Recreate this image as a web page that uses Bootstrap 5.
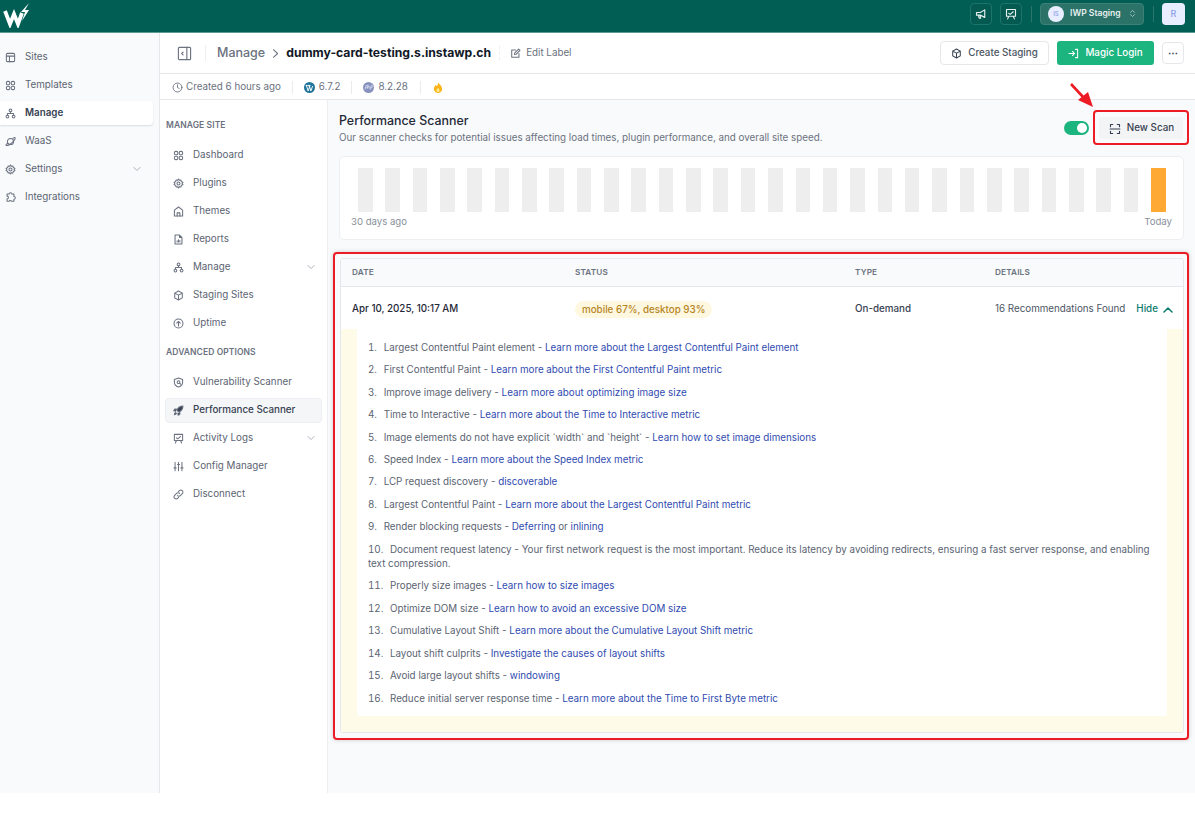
<!DOCTYPE html>
<html lang="en"><head><meta charset="utf-8"><title>Performance Scanner</title>
<link href="https://cdn.jsdelivr.net/npm/bootstrap@5.3.0/dist/css/bootstrap.min.css" rel="stylesheet">
<style>
html,body{height:100%;background:#fff}
body{font-family:Inter,"Liberation Sans",sans-serif;font-size:9.8px;color:#4b5563;overflow:hidden}
svg.i{width:11px;height:11px;fill:none;stroke:currentColor;stroke-width:1.5;stroke-linecap:round;stroke-linejoin:round;flex:none}
.app{height:793px;display:flex;flex-direction:column}
.topbar{height:33px;background:#005e54;border-bottom:1px solid #5c9b93;padding:0 10px 0 3px;flex:none}
.logo{width:28px;height:27px;margin-bottom:3px}
.tb-icon{width:22px;height:22px;border:1px solid #1d7469;border-radius:4px;color:#e5efed;background:#045a50;margin-bottom:5px}
.tb-icon svg.i{width:12px;height:12px}
.tb-div{width:1px;height:16px;background:#2c756c;margin:0 8px 5px 9px}
.org{width:104px;height:22px;background:#2b7269;border:1px solid #3d8077;border-radius:4px;color:#e8f1ef;font-weight:600;font-size:8.6px;padding:0 6px 0 7px;margin-bottom:5px}
.org .av{width:16px;height:16px;border-radius:50%;background:#e8eeff;color:#8d9fe6;font-size:6px;font-weight:500;margin-right:6px}
.user{width:23px;height:22px;background:#e8eeff;border-radius:4px;color:#8d9fe6;font-size:9px;font-weight:500;margin-bottom:4px}
.body-row{flex:1;min-height:0}
.side{width:160px;flex:none;background:#f9fafb;border-right:1px solid #e5e7eb;padding-top:10px}
.navi{height:28px;display:flex;align-items:center;color:#5b6472;text-decoration:none;font-size:9.8px}
.side .navi{padding-left:5px;padding-right:11px;margin-right:6px}
.side .navi svg.i:first-child{margin-right:9px;color:#6b7280}
.side .wrap-active{height:28px;display:flex;align-items:center;margin-right:6px}
.side .active-i{height:24px;width:100%;background:#fff;border-radius:0 4px 4px 0;box-shadow:0 1px 2px rgba(0,0,0,.12);margin:0;padding-left:5px;color:#374151;font-weight:600}
.side .active-i svg.i{margin-right:9px}
.chev{margin-left:auto;width:10px!important;height:10px!important;color:#9ca3af;stroke-width:1.3!important}
.head1{height:41px;border-bottom:1px solid #e5e7eb;padding:0 11px 0 17px;flex:none}
.collapse-ic{width:15px!important;height:15px!important;color:#6b7280;stroke-width:1.2!important}
.vr1{width:1px;height:16px;background:#eceef1;margin:0 11px 0 13px}
.crumb{font-size:12.5px;color:#6b7280;font-weight:500}
.crumb svg{width:11px;height:11px;color:#6b7280;margin:0 5px}
.site{font-size:12.2px;color:#111827;font-weight:700}
.edit{font-size:9.8px;color:#6b7280;margin-left:8px;padding-left:10px;border-left:1px dashed #eceef1;line-height:14px}
.edit svg{margin-right:5px}
.btn-w{--bs-btn-font-size:9.8px;height:24px;width:109px;padding:0;justify-content:center;background:#fff;border:1px solid #e5e7eb;color:#4b5563;font-weight:500;border-radius:4px;display:flex;align-items:center;gap:6px}
.btn-m{--bs-btn-font-size:9.8px;height:24px;width:97px;padding:0;background:#1cb47f;border:0;color:#fff;font-weight:500;border-radius:3px;display:flex;align-items:center;justify-content:center;gap:6px;margin:0 8px}
.btn-d{width:22px;height:22px;padding:0;background:#fff;border:1px solid #e5e7eb;border-radius:4px;color:#374151;font-size:10px;font-weight:700;line-height:1}
.head2{height:26px;border-bottom:1px solid #e5e7eb;padding:1px 0 0 12px;color:#6b7280;font-size:9.8px;flex:none}
.head2 .m{display:flex;align-items:center;gap:3px}
.head2 .v{gap:4px}
.head2 .s{width:1px;height:13px;background:#e9ebee;margin:0 11px}
.head2 .s.w{margin:0 12px}
.sub{width:168px;flex:none;border-right:1px solid #eceef1;padding:0 5px;background:#fff}
.sec{font-size:8.5px;font-weight:600;color:#6b7280;line-height:14px;letter-spacing:.01em;padding-left:1px}
.sub .navi{padding:0 6px 0 8px}
.sub .navi svg.i:first-child{margin-right:9px;color:#6b7280}
.sub .act{height:25px;margin:2px 0 1px;background:#f5f6f8;border:1px solid #eceef1;border-radius:4px;color:#374151;font-weight:500;padding-left:7px}
.content{background:#f9fafb;padding:0 6px;min-width:0}
.top-row{height:46px;padding:10px 0 0 5px;position:relative}
.heading{padding-top:3px}
.title{font-size:12.4px;color:#1f2937;font-weight:500;line-height:16px}
.desc{font-size:9.8px;color:#6b7280;line-height:14px;margin-top:2px}
.ann{border:2px solid #ed1c24;border-radius:4px}
.ann-btn{width:96px;height:35px}
.scan{width:84px;height:22px;background:#f3f4f6;border:0;border-radius:3px;color:#374151;font-size:9.8px;font-weight:500;display:flex;align-items:center;justify-content:center;gap:6px;padding:2px 0 0 1px}
.scan svg{width:12px;height:12px}
.tog{width:25px;height:14px;background:#1cb47f;border-radius:7px;margin-right:4px;padding:2px;justify-content:flex-end}
.tog span{width:10px;height:10px;background:#fff;border-radius:50%;display:block}
.chart{height:84px;background:#fff;border:1px solid #eceef1;border-radius:5px;margin:10px 5px 0;padding:11px 11px 0}
.bars{padding:0 6px 0 7px;height:44px}
.bars i{width:14.6px;background:#eeeeee;display:block}
.bars i.today{background:#ffa935}
.cap{font-size:9.6px;color:#8a9099;line-height:14px;margin-top:3px}
.tbl-ann{margin:12px 0 0 -1px;padding:4px 3px 5px 5px;width:856px;box-shadow:0 0 4px rgba(0,0,0,.2);height:488px}
.tcard{border:1px solid #e5e7eb;border-radius:3px;background:#fff;height:100%;overflow:hidden}
.table{table-layout:fixed;margin:0;--bs-table-color:#4b5563;font-size:9.8px}
.table th{background:#f9fafb;font-size:8.2px;font-weight:600;color:#6b7280;height:27px;padding:0 0 0 11px;vertical-align:middle;border-bottom:1px solid #e5e7eb;letter-spacing:.02em}
.table td{height:43px;padding:4px 0 0 11px;vertical-align:middle;border:0}
.date{color:#1f2937;font-weight:500}
.pill{background:#fff8e1;color:#b6851f;border-radius:9px;padding:0 7px;line-height:17px;display:inline-block;font-size:9.8px;font-weight:500}
.hide{color:#0b7a6c;font-weight:500;margin-left:11px;text-decoration:none;display:inline-flex;align-items:center;gap:4px}
.hide svg{width:11px;height:11px}
.table td.det{padding:0;height:auto}
.yel{background:#fefbe8;padding:0 16px 17px}
.white{background:#fff;border-radius:0 0 4px 4px;padding:12px 11px 9px;height:387px}
ol.recs{list-style-position:inside;margin:0;padding:0;color:#5b6472}
ol.recs li{line-height:14.4px;margin-bottom:8px}
ol.recs li span{margin-left:4px}
ol.recs a{color:#2f4bb0;text-decoration:none}
.arrow{position:absolute;left:736px;top:-18px;width:24px;height:26px}
</style></head>
<body>
<svg width="0" height="0" class="d-none">
<symbol id="grid" viewBox="0 0 16 16"><rect x="2" y="2" width="5" height="5" rx="2"/><rect x="9" y="2" width="5" height="5" rx="2"/><rect x="2" y="9" width="5" height="5" rx="2"/><rect x="9" y="9" width="5" height="5" rx="2"/></symbol>
<symbol id="layout" viewBox="0 0 16 16"><rect x="2" y="2" width="12" height="12" rx="1.5"/><path d="M2 6h12M6.5 6v8"/></symbol>
<symbol id="tree" viewBox="0 0 16 16"><circle cx="8" cy="3.5" r="2"/><circle cx="3.5" cy="12.5" r="2"/><circle cx="12.5" cy="12.5" r="2"/><path d="M8 5.5V8M3.5 10.5V8h9v2.5"/></symbol>
<symbol id="planet" viewBox="0 0 16 16"><circle cx="8" cy="8" r="4.5"/><path d="M4 10.500C2 12 1 13 1.500 13.500 2.500 14.500 7 12.500 10.500 9.500S15.500 3.500 14.500 2.500C14 2 13 2.500 11.500 3.500"/></symbol>
<symbol id="gear" viewBox="0 0 16 16"><circle cx="8" cy="8" r="2.200"/><path d="M8 1.500l1.300 1.900 2.300-.5.500 2.300 2.400 1.300-1.300 1.500 1.300 1.500-2.400 1.300-.5 2.300-2.300-.5L8 14.500l-1.300-1.900-2.300.5-.5-2.300-2.400-1.300L2.800 8 1.500 6.500l2.400-1.300.5-2.300 2.300.5z"/></symbol>
<symbol id="puzzle" viewBox="0 0 16 16"><path d="M6 3a2 2 0 0 1 4 0h3v3.500a2 2 0 0 1 0 4V13.500H9.500a2 2 0 0 0-3.500 0H3V10a2 2 0 0 0 0-4V3z"/></symbol>
<symbol id="chev" viewBox="0 0 16 16"><path d="M3 5.500l5 5 5-5"/></symbol>
<symbol id="cube" viewBox="0 0 16 16"><path d="M8 1.500l5.500 3v7L8 14.500l-5.500-3v-7zM2.500 4.500L8 7.500l5.500-3M8 7.500v7"/></symbol>
<symbol id="clock" viewBox="0 0 16 16"><circle cx="8" cy="8" r="6.500"/><path d="M8 4v4l2.500 1.500"/></symbol>
<symbol id="report" viewBox="0 0 16 16"><path d="M3 1.500h6.500L13 5v9.500H3zM9.500 1.500V5H13M6 11.500V10M8 11.500V8.500M10 11.500V9.500"/></symbol>
<symbol id="up" viewBox="0 0 16 16"><circle cx="8" cy="8" r="6.500"/><path d="M8 11.500V5M5.500 7.500L8 5l2.500 2.500"/></symbol>
<symbol id="shield" viewBox="0 0 16 16"><path d="M8 1.500l6 2v4c0 4-3 6-6 7-3-1-6-3-6-7v-4z"/><circle cx="8" cy="7.500" r="2"/><path d="M9.500 9l1.500 1.500"/></symbol>
<symbol id="board" viewBox="0 0 16 16"><path d="M2 2h12v9H2zM5 11l-1.500 3.500M11 11l1.500 3.500M5 7l2 1.500L11 5"/></symbol>
<symbol id="sliders" viewBox="0 0 16 16"><path d="M3 2v12M8 2v12M13 2v12M1.500 10h3M6.500 5h3M11.500 10h3"/></symbol>
<symbol id="link" viewBox="0 0 16 16"><path d="M6.500 9.500a3 3 0 0 0 4.300 0l2.700-2.700a3 3 0 0 0-4.300-4.300L8 3.700M9.500 6.500a3 3 0 0 0-4.300 0L2.500 9.200a3 3 0 0 0 4.300 4.300L8 12.300"/></symbol>
</svg>
<div class="app">
<nav class="navbar topbar d-flex justify-content-between align-items-center flex-nowrap">
  <svg class="logo" viewBox="0 0 28 27"><polyline points="2,10 7,23 11,13 15,23 19,12" fill="none" stroke="#fff" stroke-width="3.800" stroke-linejoin="miter"/><path d="M26 2l-8 9h4l-3 9 7-11h-4z" fill="#fff"/></svg>
  <div class="d-flex align-items-center">
    <div class="tb-icon d-flex align-items-center justify-content-center me-2"><svg class="i" viewBox="0 0 16 16"><path d="M2 6h5l6-3.500v10L7 9.500H2zM4.500 9.500l1 4h2l-1-4"/></svg></div>
    <div class="tb-icon d-flex align-items-center justify-content-center"><svg class="i"><use href="#board"/></svg></div>
    <div class="tb-div"></div>
    <div class="org d-flex align-items-center"><span class="av d-flex align-items-center justify-content-center">IS</span>IWP Staging<svg class="i ms-auto" style="width:9px;height:9px;opacity:.7" viewBox="0 0 16 16"><path d="M4.500 6L8 2.500 11.500 6M4.500 10L8 13.500 11.500 10"/></svg></div>
    <div class="tb-div"></div>
    <div class="user d-flex align-items-center justify-content-center">R</div>
  </div>
</nav>
<div class="body-row d-flex">
  <aside class="side">
    <nav class="nav flex-column d-block">
      <a class="navi" href="#"><svg class="i"><use href="#layout"/></svg>Sites</a>
      <a class="navi" href="#"><svg class="i"><use href="#grid"/></svg>Templates</a>
      <div class="wrap-active"><a class="navi active-i" href="#"><svg class="i"><use href="#tree"/></svg>Manage</a></div>
      <a class="navi" href="#"><svg class="i"><use href="#planet"/></svg>WaaS</a>
      <a class="navi" href="#"><svg class="i"><use href="#gear"/></svg>Settings<svg class="i chev"><use href="#chev"/></svg></a>
      <a class="navi" href="#"><svg class="i"><use href="#puzzle"/></svg>Integrations</a>
    </nav>
  </aside>
  <div class="flex-grow-1 d-flex flex-column" style="min-width:0">
    <div class="head1 d-flex align-items-center">
      <svg class="i collapse-ic" viewBox="0 0 16 16"><rect x="1.500" y="1.500" width="13" height="13" rx="1"/><path d="M10.500 1.500v13M6.500 6.500L5 8l1.500 1.500"/></svg>
      <div class="vr1"></div>
      <div class="crumb d-flex align-items-center">Manage<svg class="i" viewBox="0 0 16 16"><path d="M5 2.500L11 8l-6 5.500"/></svg></div>
      <div class="site">dummy-card-testing.s.instawp.ch</div>
      <div class="edit d-flex align-items-center"><svg class="i" viewBox="0 0 16 16"><path d="M8 3H2.500v10.500H13V8M6.500 9.500l.5-2.500L12.500 1.500l2 2L9 9z"/></svg>Edit Label</div>
      <div class="d-flex align-items-center ms-auto">
        <button class="btn btn-w"><svg class="i" style="color:#374151"><use href="#cube"/></svg>Create Staging</button>
        <button class="btn btn-m"><svg class="i" viewBox="0 0 16 16"><path d="M1.500 8h8M6.500 5l3 3-3 3M11 2h3v12h-3"/></svg>Magic Login</button>
        <button class="btn btn-d">&#8943;</button>
      </div>
    </div>
    <div class="head2 d-flex align-items-center">
      <div class="m"><svg class="i" style="color:#6b7280;stroke-width:1.3"><use href="#clock"/></svg>Created 6 hours ago</div><div class="s"></div>
      <div class="m v"><svg width="11" height="11" viewBox="0 0 16 16"><circle cx="8" cy="8" r="8" fill="#21759b"/><path d="M2.500 5h3M6 5h3.500M3.500 5l2.500 8 2-5.500-1-2.500M7.500 5l2.500 8 2.500-7" fill="none" stroke="#fff" stroke-width="1.400"/></svg><span>6.7.2</span></div><div class="s"></div>
      <div class="m v"><svg width="11" height="11" viewBox="0 0 16 16"><circle cx="8" cy="8" r="8" fill="#8892bf"/><path d="M3 11l1.500-6h2c1.500 0 1 3-1 3H4M7.500 4l-1 6M7 7h3l-.5 3M11 11l1-6h1.500c1.500 0 1 3-1 3h-1" fill="none" stroke="#dfe3f3" stroke-width="1"/></svg><span>8.2.28</span></div><div class="s w"></div>
      <div class="m"><svg width="10" height="11" viewBox="0 0 14 16"><path d="M7 0c1 3 6 5 6 10a6 6 0 0 1-12 0c0-3 2-4 3-6 .5 1 1 2 1.500 2C6.500 4.500 7.500 2.500 7 0z" fill="#fbb315"/><path d="M7 8c.5 1.500 2.500 2.500 2.500 4.500a2.500 2.500 0 0 1-5 0C4.500 10.500 6.500 10 7 8z" fill="#fde68a"/></svg></div>
    </div>
    <div class="d-flex flex-grow-1" style="min-height:0">
      <aside class="sub">
        <div class="sec" style="margin-top:18px;margin-bottom:9px">MANAGE SITE</div>
        <a class="navi" href="#"><svg class="i"><use href="#grid"/></svg>Dashboard</a>
        <a class="navi" href="#"><svg class="i"><use href="#gear"/></svg>Plugins</a>
        <a class="navi" href="#"><svg class="i" viewBox="0 0 16 16"><path d="M8 1.500l6 4.500v8.500H2V6z"/><path d="M6 14.500V10h4v4.500"/></svg>Themes</a>
        <a class="navi" href="#"><svg class="i"><use href="#report"/></svg>Reports</a>
        <a class="navi" href="#"><svg class="i"><use href="#tree"/></svg>Manage<svg class="i chev"><use href="#chev"/></svg></a>
        <a class="navi" href="#"><svg class="i"><use href="#cube"/></svg>Staging Sites</a>
        <a class="navi" href="#"><svg class="i"><use href="#up"/></svg>Uptime</a>
        <div class="sec" style="margin-top:8px;margin-bottom:9px">ADVANCED OPTIONS</div>
        <a class="navi" href="#"><svg class="i"><use href="#shield"/></svg>Vulnerability Scanner</a>
        <a class="navi act" href="#"><svg class="i" viewBox="0 0 16 16" style="fill:#374151"><path d="M14.500 1.500c-4 0-7 2-9 6l3 3c4-2 6-5 6-9zM5 6H2.500L1 8.500l3 .5M10 11v2.500L7.500 15 7 12M4 11c-1.500.5-2 2-2 3 1 0 2.500-.5 3-2"/></svg>Performance Scanner</a>
        <a class="navi" href="#"><svg class="i"><use href="#board"/></svg>Activity Logs<svg class="i chev"><use href="#chev"/></svg></a>
        <a class="navi" href="#"><svg class="i"><use href="#sliders"/></svg>Config Manager</a>
        <a class="navi" href="#"><svg class="i"><use href="#link"/></svg>Disconnect</a>
      </aside>
      <main class="content flex-grow-1">
        <div class="top-row d-flex align-items-start justify-content-between">
          <div class="heading">
            <div class="title">Performance Scanner</div>
            <div class="desc">Our scanner checks for potential issues affecting load times, plugin performance, and overall site speed.</div>
          </div>
          <div class="d-flex align-items-center">
            <div class="tog d-flex align-items-center"><span></span></div>
            <div class="ann ann-btn d-flex align-items-center justify-content-center"><button class="scan"><svg class="i" viewBox="0 0 16 16"><path d="M5 2H2v3M11 2h3v3M5 14H2v-3M11 14h3v-3M1.500 8h13"/></svg>New Scan</button></div>
          </div>
          <svg class="arrow" viewBox="0 0 24 26"><path d="M1 2l13 14" stroke="#ed1c24" stroke-width="2.600" fill="none"/><path d="M23 25L8 18 18 10z" fill="#ed1c24"/></svg>
        </div>
        <section class="chart">
          <div class="bars d-flex justify-content-between" id="bars"></div>
          <div class="cap d-flex justify-content-between"><span>30 days ago</span><span>Today</span></div>
        </section>
        <div class="ann tbl-ann">
          <div class="tcard">
            <table class="table">
              <colgroup><col style="width:223px"><col style="width:280px"><col style="width:140px"><col></colgroup>
              <thead><tr><th>DATE</th><th>STATUS</th><th>TYPE</th><th>DETAILS</th></tr></thead>
              <tbody>
                <tr><td class="date">Apr 10, 2025, 10:17 AM</td><td><span class="pill">mobile 67%, desktop 93%</span></td><td class="date" style="color:#374151">On-demand</td><td style="white-space:nowrap">16 Recommendations Found<a class="hide" href="#">Hide <svg class="i"><path d="M2 8l4-4 4 4"/></svg></a></td></tr>
                <tr><td class="det" colspan="4"><div class="yel"><div class="white">
                  <ol class="recs">
                    <li><span>Largest Contentful Paint element - <a href="#">Learn more about the Largest Contentful Paint element</a></span></li>
                    <li><span>First Contentful Paint - <a href="#">Learn more about the First Contentful Paint metric</a></span></li>
                    <li><span>Improve image delivery - <a href="#">Learn more about optimizing image size</a></span></li>
                    <li><span>Time to Interactive - <a href="#">Learn more about the Time to Interactive metric</a></span></li>
                    <li><span>Image elements do not have explicit `width` and `height` - <a href="#">Learn how to set image dimensions</a></span></li>
                    <li><span>Speed Index - <a href="#">Learn more about the Speed Index metric</a></span></li>
                    <li><span>LCP request discovery - <a href="#">discoverable</a></span></li>
                    <li><span>Largest Contentful Paint - <a href="#">Learn more about the Largest Contentful Paint metric</a></span></li>
                    <li><span>Render blocking requests - <a href="#">Deferring</a> or <a href="#">inlining</a></span></li>
                    <li><span>Document request latency - Your first network request is the most important. Reduce its latency by avoiding redirects, ensuring a fast server response, and enabling text compression.</span></li>
                    <li><span>Properly size images - <a href="#">Learn how to size images</a></span></li>
                    <li><span>Optimize DOM size - <a href="#">Learn how to avoid an excessive DOM size</a></span></li>
                    <li><span>Cumulative Layout Shift - <a href="#">Learn more about the Cumulative Layout Shift metric</a></span></li>
                    <li><span>Layout shift culprits - <a href="#">Investigate the causes of layout shifts</a></span></li>
                    <li><span>Avoid large layout shifts - <a href="#">windowing</a></span></li>
                    <li><span>Reduce initial server response time - <a href="#">Learn more about the Time to First Byte metric</a></span></li>
                  </ol>
                </div></div></td></tr>
              </tbody>
            </table>
          </div>
        </div>
      </main>
    </div>
  </div>
</div>
</div>
<script>
var b=document.getElementById('bars');
for(var n=0;n<30;n++){var e=document.createElement('i');if(n==29)e.className='today';b.appendChild(e);}
</script>
<script src="https://cdn.jsdelivr.net/npm/bootstrap@5.3.0/dist/js/bootstrap.bundle.min.js"></script>
</body></html>
